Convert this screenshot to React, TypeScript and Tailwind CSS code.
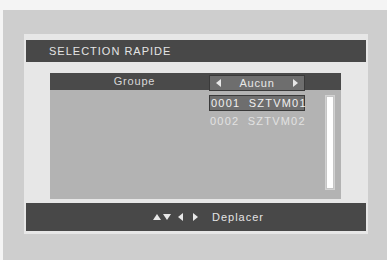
function Tri({ dir }: { dir: "up" | "down" | "left" | "right" }) {
  const pts = {
    up: "0,7 4,1 8,7",
    down: "0,1 8,1 4,7",
    left: "6,0 6,8 1,4",
    right: "1,0 1,8 6,4",
  }[dir]
  const w = dir === "up" || dir === "down" ? 8 : 7
  return (
    <svg width={w} height={8} viewBox={`0 0 ${w} 8`} className="block">
      <polygon points={pts} fill="#e8e8e8" />
    </svg>
  )
}

export default function App() {
  return (
    <div
      className="w-[387px] h-[260px] bg-[#f4f4f4] pl-[3px] pt-[10px] flex"
      style={{ fontFamily: '"Liberation Sans", Arial, sans-serif' }}
    >
      <div className="flex-1 bg-[#cecece] pl-[21px] pt-[24px]">
        <div className="w-[344px] h-[200px] bg-[#e7e7e7] px-[2px] pt-[6px] flex flex-col">
          {/* title bar */}
          <div className="h-[22px] bg-[#484848] flex items-center pl-[23px] text-[11px] tracking-[1px] text-[#e4e4e4]">
            SELECTION RAPIDE
          </div>

          {/* inner list area */}
          <div className="mt-[11px] ml-[24px] w-[291px] h-[126px] bg-[#b3b3b3] flex flex-col">
            <div className="h-[17px] bg-[#4a4a4a] flex relative">
              <div className="w-[159px] flex items-center justify-center pl-[10px] text-[11px] tracking-[0.8px] text-[#d8d8d8]">
                Groupe
              </div>
              <div className="mt-[2px] w-[96px] h-[16px] bg-[#6e6e6e] border border-[#3a3a3a] flex items-center justify-between px-[5px] text-[11px] tracking-[0.8px] text-[#e8e8e8]">
                <Tri dir="left" />
                <span>Aucun</span>
                <Tri dir="right" />
              </div>
            </div>
            <div className="flex flex-1 pt-[5px]">
              <div className="w-[159px]" />
              <div className="w-[96px] flex flex-col">
                <div className="h-[16px] bg-[#6e6e6e] border border-[#3a3a3a] flex items-center pl-[1px] text-[11px] tracking-[1.2px] text-[#f0f0f0] whitespace-pre">
                  0001  SZTVM01
                </div>
                <div className="h-[16px] mt-[2px] flex items-center pl-[1px] text-[11px] tracking-[1.2px] text-[#e2e2e2] whitespace-pre">
                  0002  SZTVM02
                </div>
              </div>
              <div className="ml-[20px] w-[10px] h-[95px] bg-[#c6c6c6] border border-[#d2d2d2] flex justify-center py-[1px]">
                <div className="w-[6px] h-full bg-white" />
              </div>
            </div>
          </div>

          {/* bottom bar */}
          <div className="mt-[4px] h-[28px] bg-[#484848] flex items-center pl-[127px] text-[11px] tracking-[1px] text-[#e4e4e4]">
            <Tri dir="up" />
            <span className="ml-[2px]"><Tri dir="down" /></span>
            <span className="ml-[6px]"><Tri dir="left" /></span>
            <span className="ml-[8px]"><Tri dir="right" /></span>
            <span className="ml-[13px]">Deplacer</span>
          </div>
        </div>
      </div>
    </div>
  )
}
